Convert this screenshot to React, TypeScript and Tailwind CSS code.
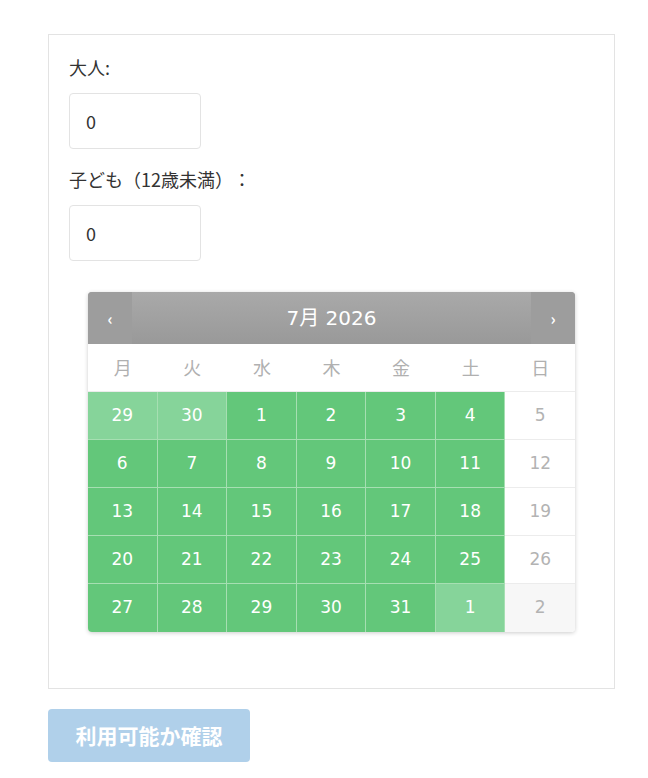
import React, { useState } from 'react';

type Day = { n: number; kind: 'avail' | 'other' | 'off' | 'offOther' };

const weekdays = ['月', '火', '水', '木', '金', '土', '日'];

function buildWeeks(): Day[][] {
  const weeks: Day[][] = [];
  const first: Day[] = [
    { n: 29, kind: 'other' },
    { n: 30, kind: 'other' },
    { n: 1, kind: 'avail' },
    { n: 2, kind: 'avail' },
    { n: 3, kind: 'avail' },
    { n: 4, kind: 'avail' },
    { n: 5, kind: 'off' },
  ];
  weeks.push(first);
  for (let start = 6; start <= 20; start += 7) {
    const row: Day[] = [];
    for (let i = 0; i < 7; i++) {
      row.push({ n: start + i, kind: i === 6 ? 'off' : 'avail' });
    }
    weeks.push(row);
  }
  weeks.push([
    { n: 27, kind: 'avail' },
    { n: 28, kind: 'avail' },
    { n: 29, kind: 'avail' },
    { n: 30, kind: 'avail' },
    { n: 31, kind: 'avail' },
    { n: 1, kind: 'other' },
    { n: 2, kind: 'offOther' },
  ]);
  return weeks;
}

const cellClass: Record<Day['kind'], string> = {
  avail: 'bg-[#63c77a] text-white border-[#a6dfb2]',
  other: 'bg-[#86d49a] text-white border-[#a6dfb2]',
  off: 'bg-white text-[#b3b3b3] border-[#ececec]',
  offOther: 'bg-[#f7f7f7] text-[#b3b3b3] border-[#ececec]',
};

function Calendar() {
  const weeks = buildWeeks();
  return (
    <div className="w-[487px] rounded-[4px] bg-white shadow-[0_1px_4px_rgba(0,0,0,0.2)] overflow-hidden">
      <div className="flex h-[52px] items-stretch bg-gradient-to-b from-[#a9a9a9] to-[#999999] text-white">
        <button className="flex w-[44px] items-center justify-center bg-[#9d9d9d] text-[16px] font-bold">‹</button>
        <div className="flex flex-1 items-center justify-center text-[20px] font-['DejaVu_Sans','Noto_Sans_CJK_JP',sans-serif]">
          7月 2026
        </div>
        <button className="flex w-[44px] items-center justify-center bg-[#9d9d9d] text-[16px] font-bold">›</button>
      </div>
      <div className="grid h-[48px] grid-cols-7 border-b border-[#ececec] text-[#b0b0b0] text-[18px] font-['Noto_Sans_CJK_JP',sans-serif]">
        {weekdays.map((w) => (
          <div key={w} className="flex items-center justify-center">{w}</div>
        ))}
      </div>
      {weeks.map((row, ri) => (
        <div key={ri} className="grid grid-cols-7">
          {row.map((d, ci) => (
            <div
              key={ci}
              className={`flex h-[48px] items-center justify-center text-[17px] font-['DejaVu_Sans',sans-serif] ${cellClass[d.kind]} ${ci < 6 ? 'border-r' : ''} ${ri < 4 ? 'border-b' : ''}`}
            >
              {d.n}
            </div>
          ))}
        </div>
      ))}
    </div>
  );
}

export default function App() {
  const [adults, setAdults] = useState('0');
  const [children, setChildren] = useState('0');

  return (
    <div className="min-h-[778px] bg-white px-[48px] pt-[34px] font-['Noto_Sans_CJK_JP',sans-serif] text-[#333333] [text-spacing-trim:space-all]">
      <div className="w-[567px] border border-[#e3e3e3] px-[20px] pt-[18px] pb-[56px]">
        <label className="block text-[18px] leading-[28px]">大人:</label>
        <input
          value={adults}
          onChange={(e) => setAdults(e.target.value)}
          className="mt-[12px] block h-[56px] w-[132px] rounded-[4px] border border-[#e3e3e3] px-[16px] text-[18px] text-[#333] outline-none"
        />
        <label className="mt-[16px] block text-[18px] leading-[28px]">子ども（12歳未満）：</label>
        <input
          value={children}
          onChange={(e) => setChildren(e.target.value)}
          className="mt-[12px] block h-[56px] w-[132px] rounded-[4px] border border-[#e3e3e3] px-[16px] text-[18px] text-[#333] outline-none"
        />
        <div className="mt-[31px] pl-[19px]">
          <Calendar />
        </div>
      </div>
      <button className="mt-[20px] h-[53px] w-[202px] rounded-[4px] bg-[#b0d0ea] text-[21px] font-bold text-white">
        利用可能か確認
      </button>
    </div>
  );
}
